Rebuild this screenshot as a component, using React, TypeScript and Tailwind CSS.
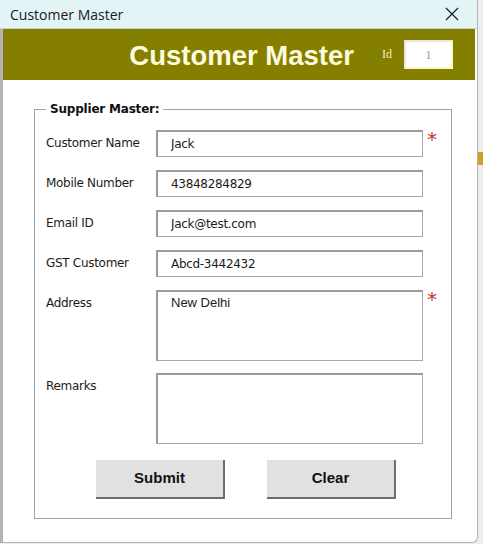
import React from 'react';

const fieldFont = { fontFamily: '"DejaVu Sans", Tahoma, sans-serif' };

const Row: React.FC<{ label: string; value?: string; tall?: boolean; required?: boolean; arial?: boolean; last?: boolean }> = ({
  label,
  value = '',
  tall,
  required,
  arial,
  last,
}) => (
  <div className={`flex items-start ${last ? '' : tall ? 'mb-[12px]' : 'mb-[13px]'}`}>
    <label className="w-[110px] pt-[5px] text-[12px] leading-[16px] tracking-[-0.3px] text-[#1b1b1b]">{label}</label>
    {tall ? (
      <textarea
        defaultValue={value}
        readOnly
        className={`w-[267px] h-[71px] resize-none bg-white border border-[#a9a9a9] border-t-2 border-l-2 border-t-[#9b9b9b] border-l-[#9b9b9b] pl-[13px] pt-[3px] outline-none text-[#1b1b1b] ${
          arial ? 'text-[13px] leading-[16px]' : 'text-[12px]'
        }`}
        style={arial ? { fontFamily: '"Liberation Sans", Arial, sans-serif' } : fieldFont}
      />
    ) : (
      <input
        defaultValue={value}
        readOnly
        className="w-[267px] h-[27px] bg-white border border-[#a9a9a9] border-t-2 border-l-2 border-t-[#9b9b9b] border-l-[#9b9b9b] pl-[13px] outline-none text-[12px] tracking-[-0.3px] text-[#1b1b1b]"
        style={fieldFont}
      />
    )}
    {required && <span className="ml-[4px] -mt-[1px] text-[20px] leading-[20px] text-[#c2303c]">*</span>}
  </div>
);

export default function App() {
  return (
    <div className="w-[483px] h-[544px] bg-[#ededed] flex overflow-hidden" style={fieldFont}>
      <div className="w-[478px] h-[543px] flex flex-col bg-white border-l-[3px] border-r border-b border-[#b4b4b4] rounded-br-[6px]">
        {/* window title bar */}
        <div className="h-[29px] -ml-[3px] bg-[#e3f4f6] border-b border-[#c9cfd0] flex items-center justify-between pl-[10px] pr-[18px]">
          <span className="text-[14px] text-[#1a1a1a]" style={{ fontFamily: '"Open Sans", sans-serif' }}>
            Customer Master
          </span>
          <svg width="14" height="14" viewBox="0 0 14 14" className="text-[#222]">
            <path d="M1 1 L13 13 M13 1 L1 13" stroke="currentColor" strokeWidth="1.3" fill="none" />
          </svg>
        </div>

        {/* olive header */}
        <div className="h-[51px] mr-[2px] bg-[#857f00] flex items-center justify-end pr-[22px]">
          <h1
            className="text-[27.5px] font-bold text-[#fdfbdc] mr-[28px] mt-[3px]"
            style={{ fontFamily: '"Liberation Sans", Arial, sans-serif' }}
          >
            Customer Master
          </h1>
          <span className="text-[12px] text-[#f4f0c8] mr-[12px] -mt-[2px]" style={{ fontFamily: '"Liberation Serif", serif' }}>
            Id
          </span>
          <div
            className="w-[49px] h-[29px] bg-white border-2 border-[#fff8c4] border-t-[#e8e8e0] border-l-[#e8e8e0] flex items-center justify-center text-[12px] text-[#9a9a9a]"
            style={{ fontFamily: '"Liberation Serif", serif' }}
          >
            1
          </div>
        </div>

        {/* form body */}
        <div className="pl-[31px] pt-[20px]">
          <fieldset className="w-[418px] border border-[#a3a3a3] pl-[11px] pt-[12px] pb-[19px]">
            <legend className="px-[4px] text-[12px] font-bold tracking-[-0.2px] text-[#111]">Supplier Master:</legend>
            <Row label="Customer Name" value="Jack" required />
            <Row label="Mobile Number" value="43848284829" />
            <Row label="Email ID" value="Jack@test.com" />
            <Row label="GST Customer" value="Abcd-3442432" />
            <Row label="Address" value="New Delhi" tall required arial />
            <Row label="Remarks" tall last />

            <div className="flex gap-[42px] mt-[16px] pl-[50px]" style={{ fontFamily: '"Liberation Sans", Arial, sans-serif' }}>
              <button className="w-[129px] h-[39px] bg-[#e1e1e1] border-r-2 border-b-2 border-[#6e6e6e] text-[15px] font-bold text-[#111]">
                Submit
              </button>
              <button className="w-[129px] h-[39px] bg-[#e1e1e1] border-r-2 border-b-2 border-[#6e6e6e] text-[15px] font-bold text-[#111]">
                Clear
              </button>
            </div>
          </fieldset>
        </div>
      </div>
      <div className="flex-1 pt-[152px]">
        <div className="h-[13px] bg-[#c9a227]" />
      </div>
    </div>
  );
}
